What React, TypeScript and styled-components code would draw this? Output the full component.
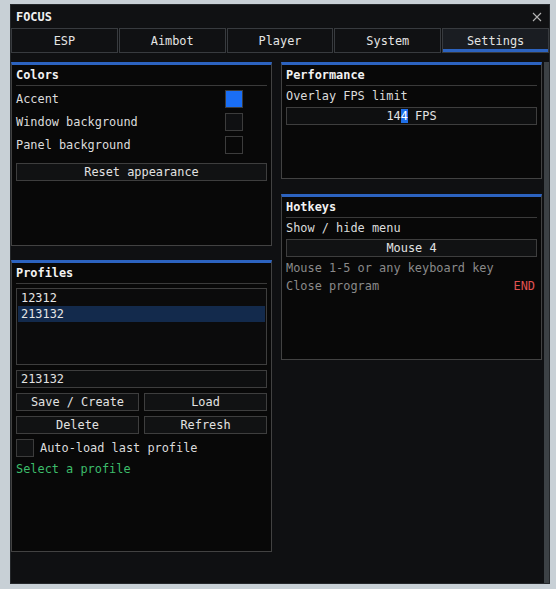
import styled, { createGlobalStyle } from "styled-components"

const GlobalStyle = createGlobalStyle`
  html, body {
    margin: 0;
    padding: 0;
    background: #c8d0d6;
  }
  body {
    font-family: "DejaVu Sans Mono", "Liberation Mono", monospace;
    font-size: 11.9px;
    color: #dcdcdc;
  }
  * { box-sizing: border-box; }
`

const ACCENT = "#2c63c0"

const Window = styled.div`
  margin: 4px 0 0 10px;
  width: 540px;
  height: 580px;
  background: #0f1012;
  border: 1px solid #24272a;
  display: flex;
  flex-direction: column;
`

const TitleBar = styled.div`
  height: 23px;
  flex: none;
  display: flex;
  align-items: center;
  justify-content: space-between;
  padding: 0 7px 0 5px;
  background: #101113;
  color: #f2f2f2;
  font-weight: bold;
`

const TabRow = styled.div`
  height: 25px;
  flex: none;
  display: grid;
  grid-template-columns: repeat(5, 1fr);
  column-gap: 1px;
`

const Tab = styled.div<{ $active?: boolean }>`
  display: flex;
  align-items: center;
  justify-content: center;
  border: 1px solid #383b3f;
  background: ${(p) => (p.$active ? "#1a1d22" : "#101113")};
  box-shadow: ${(p) => (p.$active ? `inset 0 -3px 0 ${ACCENT}` : "none")};
  color: #e4e4e4;
`

const Content = styled.div`
  flex: 1;
  display: flex;
  padding-top: 9px;
  min-height: 0;
`

const Columns = styled.div`
  display: grid;
  grid-template-columns: 261px 261px;
  column-gap: 9px;
  align-items: start;
`

const Column = styled.div<{ $gap: number }>`
  display: flex;
  flex-direction: column;
  gap: ${(p) => p.$gap}px;
`

const Scrollbar = styled.div`
  width: 5px;
  margin-left: 2px;
  background: #3c4145;
`

const Panel = styled.section<{ $height: number }>`
  height: ${(p) => p.$height}px;
  background: #080808;
  border: 1px solid #424242;
  border-top: 3px solid ${ACCENT};
  display: flex;
  flex-direction: column;
`

const PanelHeader = styled.div`
  margin: 0 4px;
  height: 21px;
  line-height: 20px;
  border-bottom: 1px solid #3a3a3a;
  font-weight: bold;
  color: #f2f2f2;
`

const PanelBody = styled.div<{ $gap: number; $top?: number }>`
  padding: ${(p) => p.$top ?? 3}px 4px 3px;
  display: flex;
  flex-direction: column;
  gap: ${(p) => p.$gap}px;
`

const Label = styled.div<{ $tone?: "hint" | "ok" }>`
  line-height: 14px;
  height: 14px;
  white-space: pre;
  color: ${(p) => (p.$tone === "hint" ? "#8a8a8a" : p.$tone === "ok" ? "#3dbd6b" : "#dcdcdc")};
`

const ColorRow = styled.div`
  height: 19px;
  display: flex;
  align-items: center;
  justify-content: space-between;
  padding-right: 24px;
`

const Swatch = styled.div<{ $color: string }>`
  width: 18px;
  height: 18px;
  background: ${(p) => p.$color};
  border: 1px solid #3c3c3c;
`

const Button = styled.div<{ $spaced?: boolean }>`
  height: 18px;
  line-height: 16px;
  border: 1px solid #3e3e3e;
  background: #111213;
  color: #e2e2e2;
  text-align: center;
  white-space: pre;
  margin-top: ${(p) => (p.$spaced ? 5 : 0)}px;
`

const Field = styled.div<{ $center?: boolean }>`
  height: 18px;
  line-height: 16px;
  border: 1px solid #3e3e3e;
  background: #0e0f10;
  color: #e2e2e2;
  padding-left: ${(p) => (p.$center ? 0 : 4)}px;
  text-align: ${(p) => (p.$center ? "center" : "left")};
  white-space: pre;
`

const Selection = styled.span`
  background: #1f6fe8;
  color: #ffffff;
`

const KeyRow = styled.div`
  display: flex;
  justify-content: space-between;
  padding-right: 2px;
`

const KeyName = styled.span`
  color: #e05252;
`

const ListBox = styled.div`
  height: 77px;
  border: 1px solid #3e3e3e;
  background: #0b0b0c;
  padding: 1px;
`

const ListItem = styled.div<{ $selected?: boolean }>`
  height: 16px;
  line-height: 16px;
  padding-left: 3px;
  background: ${(p) => (p.$selected ? "#132a4c" : "transparent")};
  color: #e6e6e6;
`

const ButtonPair = styled.div`
  display: grid;
  grid-template-columns: 1fr 1fr;
  column-gap: 5px;
`

const CheckRow = styled.div`
  display: flex;
  align-items: center;
  gap: 6px;
  height: 18px;
`

const CheckBox = styled.div`
  width: 18px;
  height: 18px;
  border: 1px solid #3c3c3c;
  background: #111213;
`

const CloseIcon = () => (
  <svg width="10" height="10" viewBox="0 0 10 10">
    <path d="M1 1 L9 9 M9 1 L1 9" stroke="#b4b4b4" strokeWidth="1.1" />
  </svg>
)

const tabs = ["ESP", "Aimbot", "Player", "System", "Settings"]
const profiles = ["12312", "213132"]

export default function App() {
  return (
    <>
      <GlobalStyle />
      <Window>
        <TitleBar>
          <span>FOCUS</span>
          <CloseIcon />
        </TitleBar>
        <TabRow>
          {tabs.map((t) => (
            <Tab key={t} $active={t === "Settings"}>
              {t}
            </Tab>
          ))}
        </TabRow>
        <Content>
          <Columns>
            <Column $gap={14}>
              <Panel $height={184}>
                <PanelHeader>Colors</PanelHeader>
                <PanelBody $gap={4}>
                  <ColorRow>
                    <Label>Accent</Label>
                    <Swatch $color="#1a6ef5" />
                  </ColorRow>
                  <ColorRow>
                    <Label>Window background</Label>
                    <Swatch $color="#0f1012" />
                  </ColorRow>
                  <ColorRow>
                    <Label>Panel background</Label>
                    <Swatch $color="#080808" />
                  </ColorRow>
                  <Button $spaced>Reset appearance</Button>
                </PanelBody>
              </Panel>
              <Panel $height={292}>
                <PanelHeader>Profiles</PanelHeader>
                <PanelBody $gap={5} $top={4}>
                  <ListBox>
                    {profiles.map((p) => (
                      <ListItem key={p} $selected={p === "213132"}>
                        {p}
                      </ListItem>
                    ))}
                  </ListBox>
                  <Field>213132</Field>
                  <ButtonPair>
                    <Button>Save / Create</Button>
                    <Button>Load</Button>
                  </ButtonPair>
                  <ButtonPair>
                    <Button>Delete</Button>
                    <Button>Refresh</Button>
                  </ButtonPair>
                  <CheckRow>
                    <CheckBox />
                    <Label>Auto-load last profile</Label>
                  </CheckRow>
                  <Label $tone="ok">Select a profile</Label>
                </PanelBody>
              </Panel>
            </Column>
            <Column $gap={15}>
              <Panel $height={117}>
                <PanelHeader>Performance</PanelHeader>
                <PanelBody $gap={4}>
                  <Label>Overlay FPS limit</Label>
                  <Field $center>
                    14<Selection>4</Selection> FPS
                  </Field>
                </PanelBody>
              </Panel>
              <Panel $height={166}>
                <PanelHeader>Hotkeys</PanelHeader>
                <PanelBody $gap={4}>
                  <Label>Show / hide menu</Label>
                  <Button>Mouse 4</Button>
                  <Label $tone="hint">Mouse 1-5 or any keyboard key</Label>
                  <KeyRow>
                    <Label $tone="hint">Close program</Label>
                    <KeyName>END</KeyName>
                  </KeyRow>
                </PanelBody>
              </Panel>
            </Column>
          </Columns>
          <Scrollbar />
        </Content>
      </Window>
    </>
  )
}
